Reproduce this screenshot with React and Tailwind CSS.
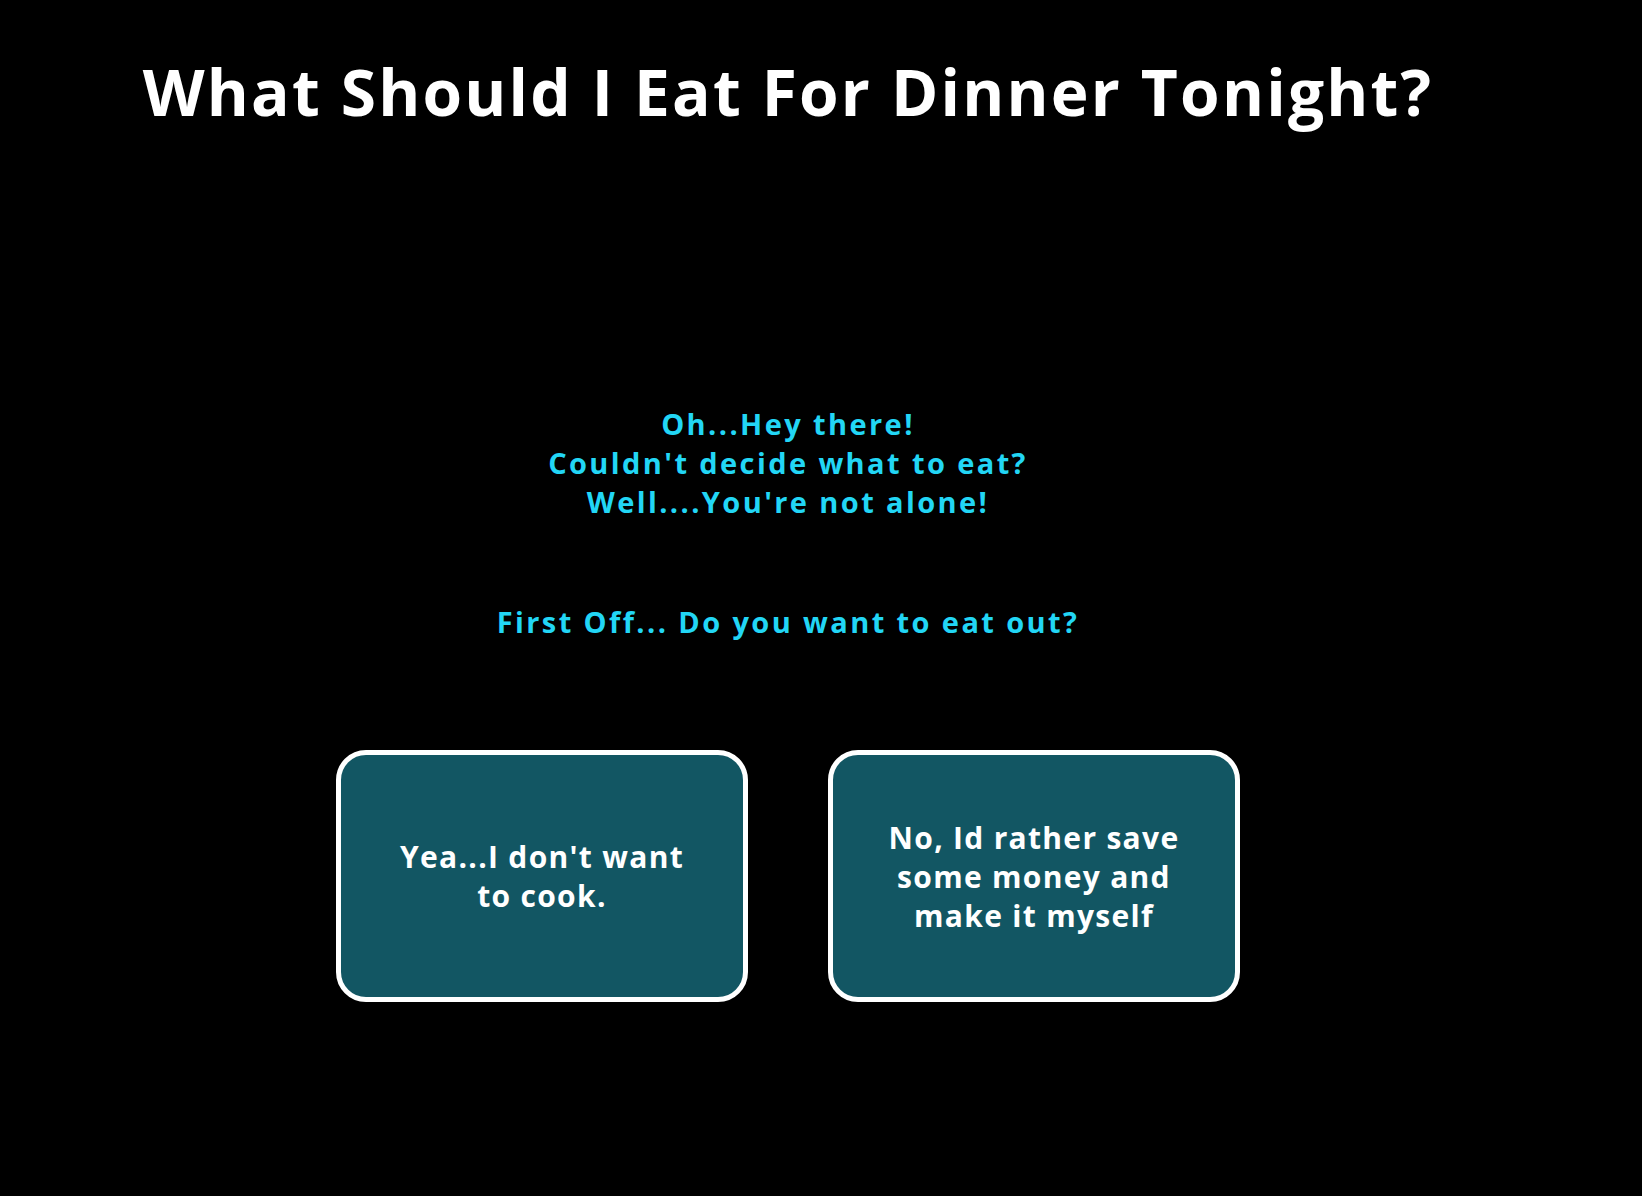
export default function App() {
  return (
    <div
      className="min-h-screen w-full bg-black text-white"
      style={{ fontFamily: '"Open Sans", "Liberation Sans", sans-serif' }}
    >
      <div className="w-[1576px] flex flex-col items-center">
        <h1 className="mt-[54px] text-[64px] leading-[76px] font-bold tracking-[2.2px]">
          What Should I Eat For Dinner Tonight?
        </h1>

        <div className="mt-[274px] text-center text-[29px] leading-[39px] font-bold tracking-[2.4px] text-[#22d6f5]">
          <p>Oh...Hey there!</p>
          <p>Couldn't decide what to eat?</p>
          <p>Well....You're not alone!</p>
        </div>

        <p className="mt-[81px] text-[29px] leading-[39px] font-bold tracking-[2.4px] text-[#22d6f5]">
          First Off... Do you want to eat out?
        </p>

        <div className="mt-[109px] flex gap-[80px]">
          <button className="w-[412px] h-[252px] rounded-[30px] border-[5px] border-white bg-[#125663] px-[44px] text-[30px] leading-[39px] font-bold tracking-[1.3px] text-white">
            Yea...I don't want to cook.
          </button>
          <button className="w-[412px] h-[252px] rounded-[30px] border-[5px] border-white bg-[#125663] px-[44px] text-[30px] leading-[39px] font-bold tracking-[1.3px] text-white">
            No, Id rather save some money and make it myself
          </button>
        </div>
      </div>
    </div>
  );
}
